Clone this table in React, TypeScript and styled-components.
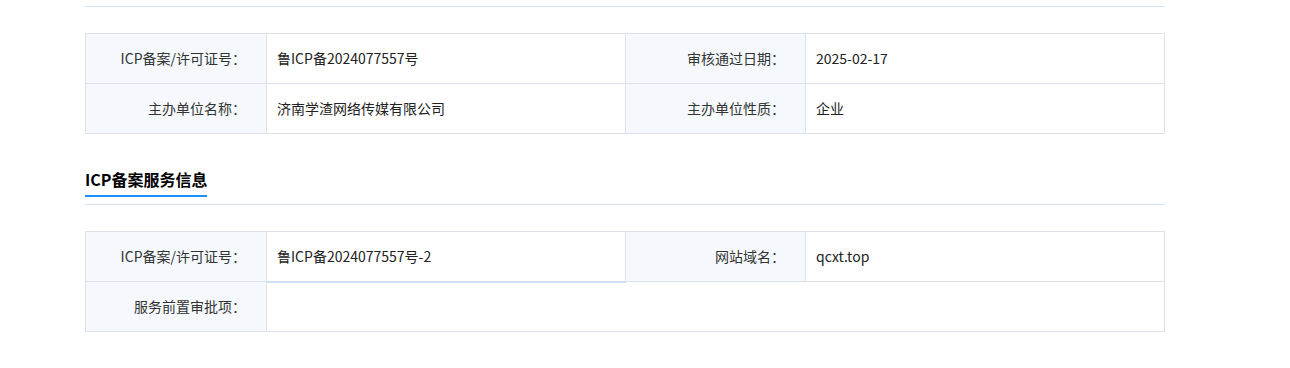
import React from 'react';
import styled, { createGlobalStyle } from 'styled-components';

const GlobalStyle = createGlobalStyle`
    body {
        margin: 0;
        background: #fff;
        font-family: "Noto Sans CJK SC", "Noto Sans", "Liberation Sans", sans-serif;
        color: #333;
    }
`;

type Field = {
    label: string;
    value: string;
    span?: boolean;
    accent?: boolean;
};

const Page = styled.div`
    width: 1080px;
    margin-left: 85px;
    padding-top: 6px;
    padding-bottom: 36px;
`;

const Rule = styled.div`
    height: 1px;
    background: #d3e4f4;
`;

const InfoTable = styled.div`
    display: grid;
    grid-template-columns: 181px 359px 180px 359px;
    border-top: 1px solid #dde2e8;
    border-left: 1px solid #dde2e8;
    margin-top: 26px;
`;

const Label = styled.div`
    height: 50px;
    display: flex;
    align-items: center;
    justify-content: flex-end;
    padding-right: 20px;
    padding-bottom: 1px;
    box-sizing: border-box;
    background: #f5f9fd;
    border-right: 1px solid #dde2e8;
    border-bottom: 1px solid #dde2e8;
    font-size: 14px;
    color: #333;
`;

const Value = styled.div<{ $span?: boolean; $accent?: boolean }>`
    height: 50px;
    display: flex;
    align-items: center;
    padding-left: 10px;
    padding-bottom: 1px;
    box-sizing: border-box;
    border-right: 1px solid #dde2e8;
    border-bottom: 1px solid ${(p) => (p.$accent ? '#cfe0f1' : '#dde2e8')};
    box-shadow: ${(p) => (p.$accent ? '0 1px 0 #cfe0f1' : 'none')};
    grid-column: ${(p) => (p.$span ? 'span 3' : 'auto')};
    font-size: 14px;
    color: #222;
    position: relative;
`;

const SectionHead = styled.div`
    margin-top: 33px;
`;

const Title = styled.h2`
    display: inline-block;
    margin: 0;
    padding-bottom: 5px;
    border-bottom: 2px solid #1890ff;
    font-size: 16px;
    line-height: 21px;
    font-weight: 700;
    color: #000;
`;

const TitleRule = styled(Rule)`
    margin-top: 7px;
`;

function Table({ fields }: { fields: Field[] }) {
    return (
        <InfoTable>
            {fields.map((f) => (
                <React.Fragment key={f.label}>
                    <Label>{f.label}：</Label>
                    <Value $span={f.span} $accent={f.accent}>
                        {f.value}
                    </Value>
                </React.Fragment>
            ))}
        </InfoTable>
    );
}

const subject: Field[] = [
    { label: 'ICP备案/许可证号', value: '鲁ICP备2024077557号' },
    { label: '审核通过日期', value: '2025-02-17' },
    { label: '主办单位名称', value: '济南学渣网络传媒有限公司' },
    { label: '主办单位性质', value: '企业' },
];

const service: Field[] = [
    { label: 'ICP备案/许可证号', value: '鲁ICP备2024077557号-2', accent: true },
    { label: '网站域名', value: 'qcxt.top' },
    { label: '服务前置审批项', value: '', span: true },
];

export default function App() {
    return (
        <>
            <GlobalStyle />
            <Page>
                <Rule />
                <Table fields={subject} />
                <SectionHead>
                    <Title>ICP备案服务信息</Title>
                    <TitleRule />
                </SectionHead>
                <Table fields={service} />
            </Page>
        </>
    );
}
